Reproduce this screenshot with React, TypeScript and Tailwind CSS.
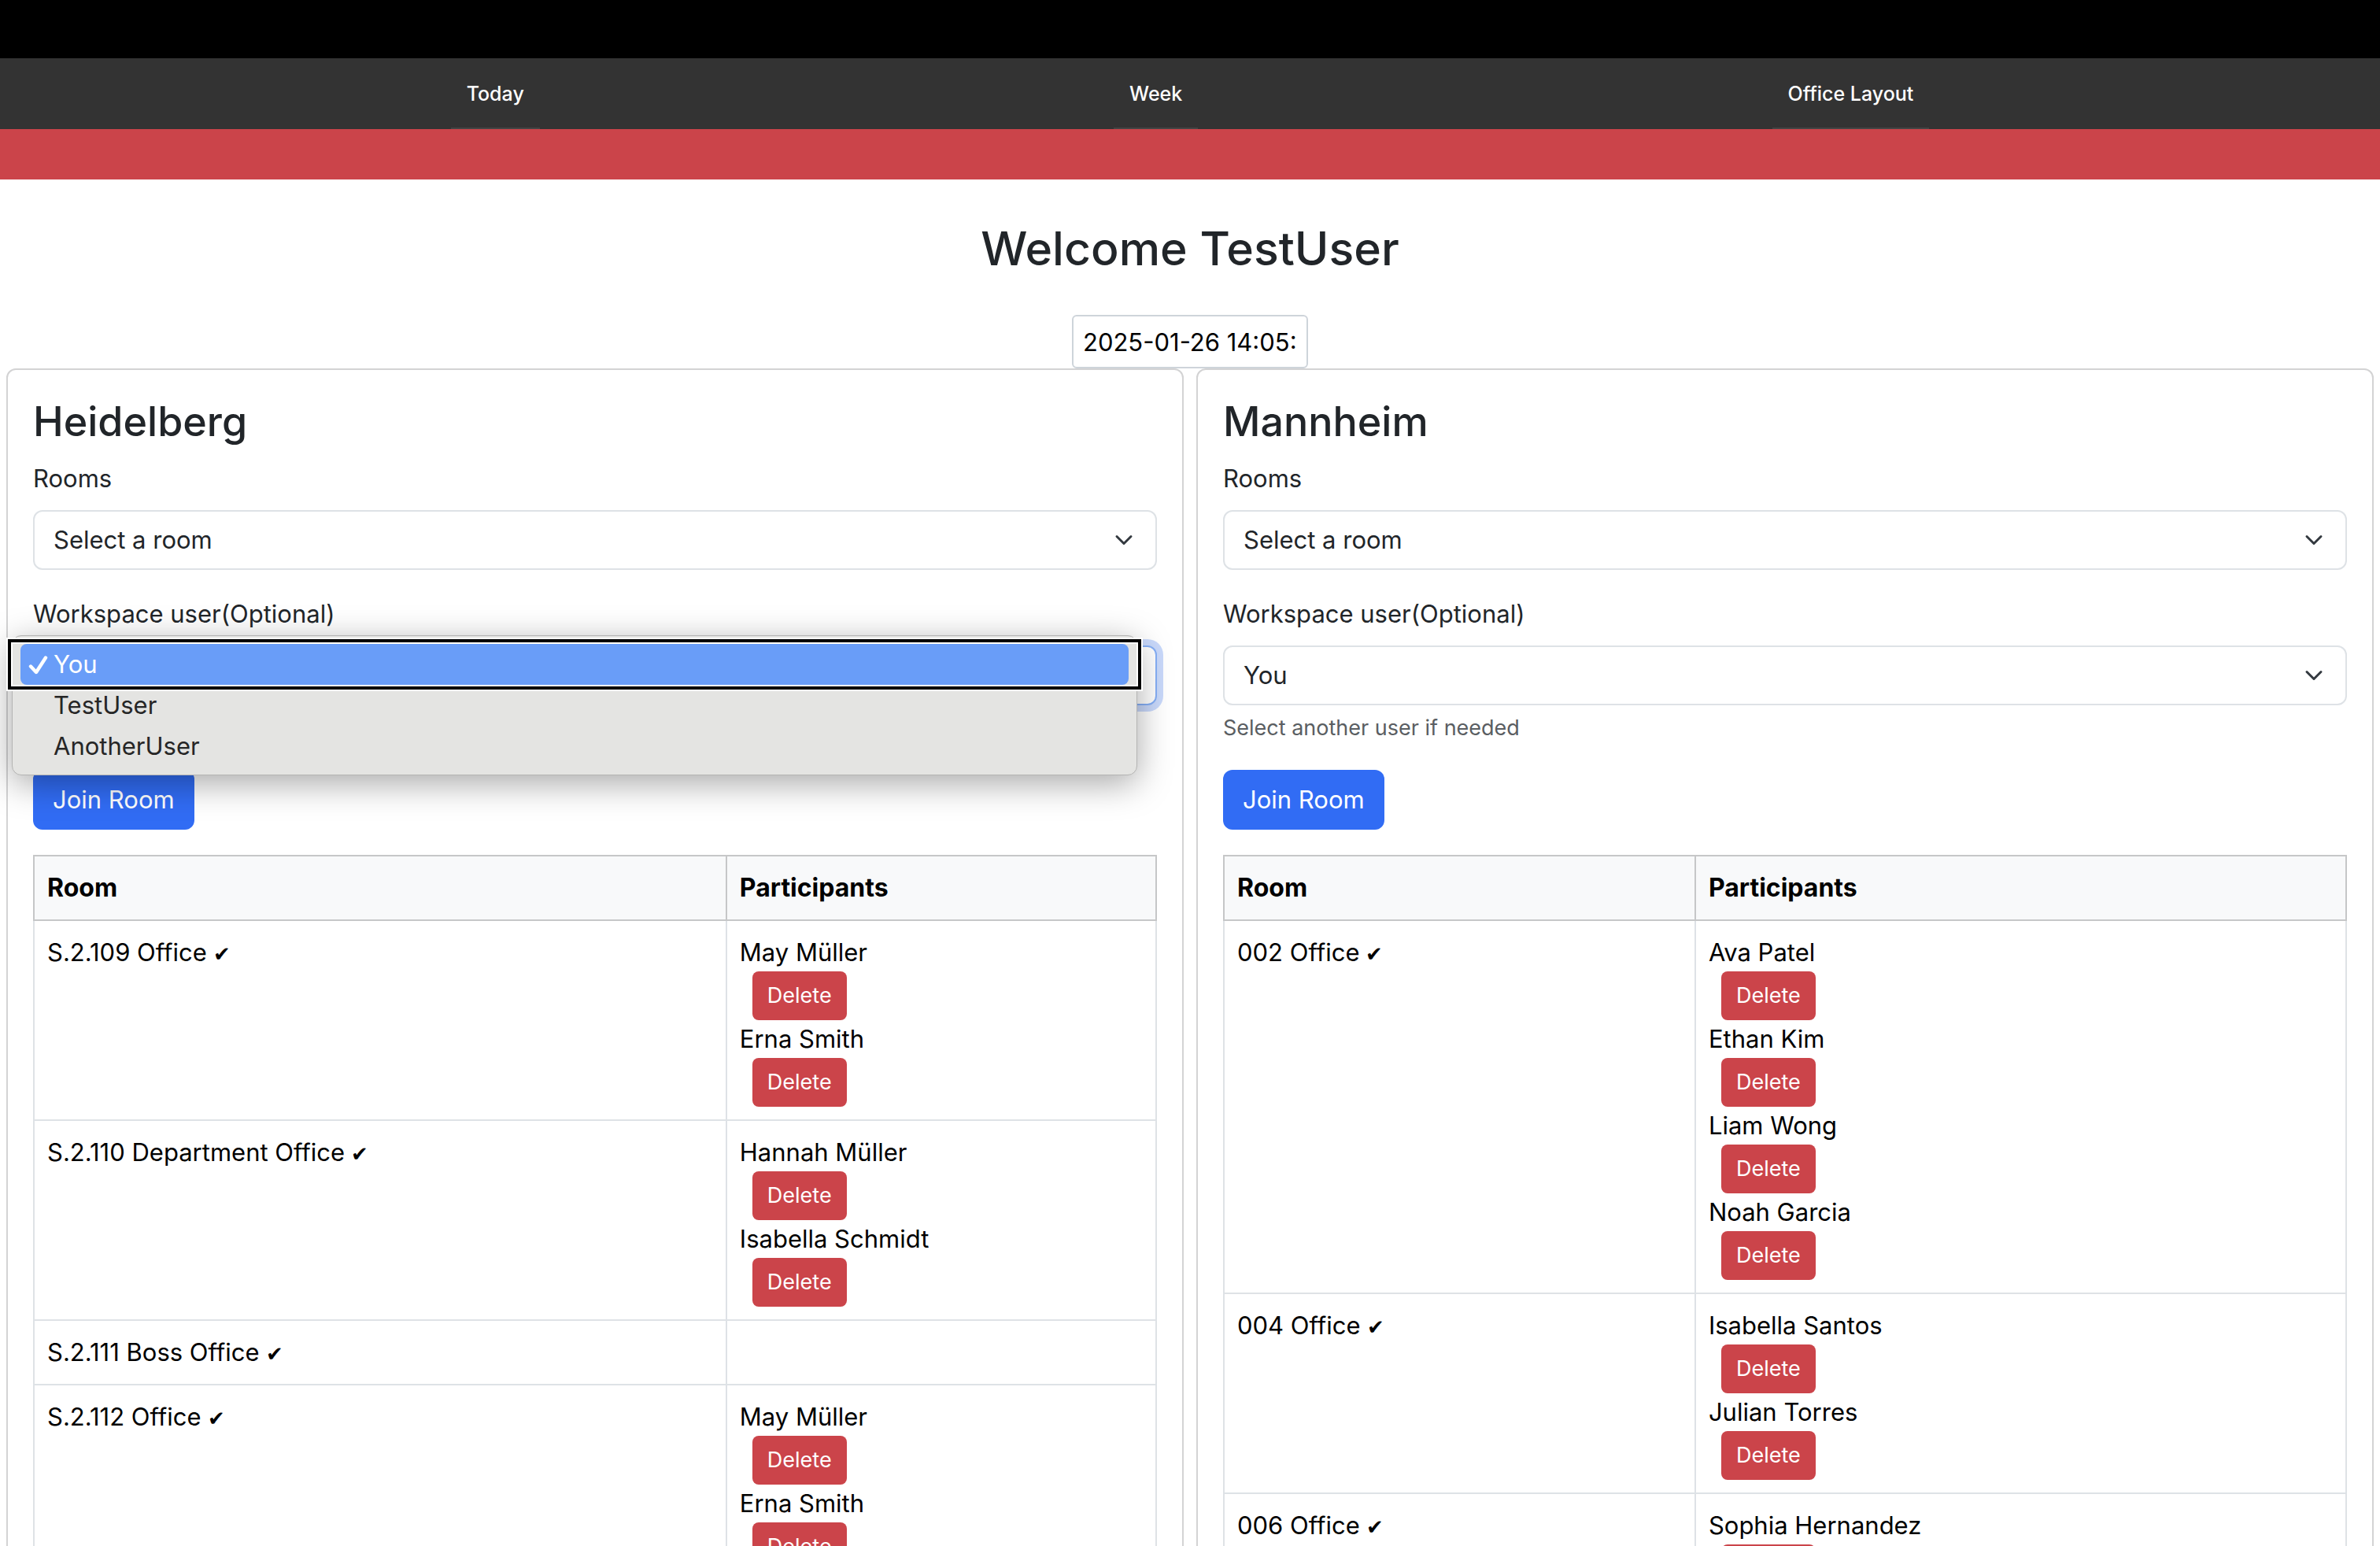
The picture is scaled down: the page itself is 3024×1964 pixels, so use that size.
type Row = { room: string; people: string[] };

const heidelberg: Row[] = [
  { room: "S.2.109 Office", people: ["May Müller", "Erna Smith"] },
  { room: "S.2.110 Department Office", people: ["Hannah Müller", "Isabella Schmidt"] },
  { room: "S.2.111 Boss Office", people: [] },
  { room: "S.2.112 Office", people: ["May Müller", "Erna Smith"] },
];

const mannheim: Row[] = [
  { room: "002 Office", people: ["Ava Patel", "Ethan Kim", "Liam Wong", "Noah Garcia"] },
  { room: "004 Office", people: ["Isabella Santos", "Julian Torres"] },
  { room: "006 Office", people: ["Sophia Hernandez"] },
];

const users = ["You", "TestUser", "AnotherUser"];

function Chevron() {
  return (
    <svg
      viewBox="0 0 16 16"
      className="pointer-events-none absolute right-[30px] top-[26px] size-6"
      fill="none"
      stroke="#343a40"
      strokeWidth="2"
      strokeLinecap="round"
      strokeLinejoin="round"
    >
      <path d="m2 5 6 6 6-6" />
    </svg>
  );
}

function SelectedMark() {
  return (
    <svg
      viewBox="0 0 26 26"
      className="mr-[6px] size-[26px]"
      fill="none"
      stroke="currentColor"
      strokeWidth="4.4"
      strokeLinecap="round"
      strokeLinejoin="round"
    >
      <path d="M3 15.5 10 23 22 4.5" />
    </svg>
  );
}

function Field({ id, label, options, open }: { id: string; label: string; options: string[]; open?: boolean }) {
  return (
    <div>
      <label htmlFor={id} className="mb-4 block text-[31px] leading-[48px]">
        {label}
      </label>
      <div className="relative">
        <select
          id={id}
          className={
            open
              ? "block h-[76px] w-full appearance-none rounded-xl border-2 border-[#86b0f7] bg-white px-6 text-[31px] ring-8 ring-[#c9d9fb] outline-none"
              : "block h-[76px] w-full appearance-none rounded-xl border-2 border-[#dee2e6] bg-white px-6 text-[31px]"
          }
        >
          {options.map((o) => (
            <option key={o}>{o}</option>
          ))}
        </select>
        <Chevron />
        {open && <UserMenu />}
      </div>
    </div>
  );
}

function UserMenu() {
  return (
    <ul
      role="listbox"
      aria-label="Workspace user"
      className="absolute -left-[27px] right-[25px] -top-[13px] rounded-xl border border-[#b4b4b3] bg-[#e4e4e2] px-[10px] py-[10px] text-[31px] leading-[52px] text-[#262626] shadow-[0_10px_44px_rgba(0,0,0,0.35)]"
    >
      {users.map((u, i) =>
        i === 0 ? (
          <li
            key={u}
            role="option"
            aria-selected="true"
            className="relative flex items-center rounded-lg bg-[#699df8] pl-[10px] text-white"
          >
            <SelectedMark />
            {u}
            <span className="absolute -inset-x-[18px] -inset-y-2 border-2 border-white">
              <span className="block h-full border-4 border-black">
                <span className="block h-full border-2 border-white" />
              </span>
            </span>
          </li>
        ) : (
          <li key={u} role="option" aria-selected="false" className="pl-[42px]">
            {u}
          </li>
        ),
      )}
    </ul>
  );
}

function RoomTable({ rows, firstCol }: { rows: Row[]; firstCol: string }) {
  return (
    <table className="mt-8 w-full table-fixed border-collapse text-[31px] leading-[48px] text-black">
      <thead>
        <tr className="bg-[#f8f9fa] text-left text-[32px] font-bold">
          <th className={"border-2 border-[#c6c7c8] p-4 " + firstCol}>Room</th>
          <th className="border-2 border-[#c6c7c8] p-4">Participants</th>
        </tr>
      </thead>
      <tbody>
        {rows.map((r) => (
          <tr key={r.room} className="align-top">
            <td className="border-2 border-[#dee2e6] p-4">
              {r.room}
              <span className="ml-2 text-[26px] leading-none">✔</span>
            </td>
            <td className="border-2 border-[#dee2e6] p-4">
              {r.people.map((p) => (
                <div key={p}>
                  {p}
                  <button
                    type="button"
                    className="ml-4 block h-[62px] rounded-lg bg-[#cb444a] px-[19px] text-[27px] text-white"
                  >
                    Delete
                  </button>
                </div>
              ))}
            </td>
          </tr>
        ))}
      </tbody>
    </table>
  );
}

function LocationCard({ name, rows, firstCol, open }: { name: string; rows: Row[]; firstCol: string; open?: boolean }) {
  return (
    <section className="flex-1 rounded-xl border-2 border-[#d3d3d4] bg-white p-8">
      <h2 className="mb-[14px] text-[52px] leading-[68px] font-medium">{name}</h2>
      <form className="flex flex-col">
        <Field id={name + "-room"} label="Rooms" options={["Select a room", ...rows.map((r) => r.room)]} />
        <div className="mt-8">
          <Field id={name + "-user"} label="Workspace user(Optional)" options={users} open={open} />
        </div>
        <p
          className={
            open
              ? "invisible mt-2 text-[27px] leading-[42px] text-[#5a5e62]"
              : "mt-2 text-[27px] leading-[42px] text-[#5a5e62]"
          }
        >
          Select another user if needed
        </p>
        <button
          type="button"
          className="mt-8 h-[76px] self-start rounded-xl bg-[#316cf4] px-[25px] text-[31px] text-white"
        >
          Join Room
        </button>
      </form>
      <RoomTable rows={rows} firstCol={firstCol} />
    </section>
  );
}

export default function App() {
  return (
    <div className="flex h-screen flex-col overflow-hidden bg-white font-['Inter',sans-serif] text-[#212529]">
      <div className="h-[74px] shrink-0 bg-black" />
      <nav className="flex h-[90px] shrink-0 justify-around bg-[#333333] px-52 text-[25px] font-medium text-white">
        {["Today", "Week", "Office Layout"].map((t) => (
          <a key={t} href="#" className="border-b-2 border-[#444444] px-5 leading-[90px]">
            {t}
          </a>
        ))}
      </nav>
      <div className="h-16 shrink-0 bg-[#cb444a]" />
      <main className="flex flex-col">
        <h1 className="mt-12 text-center text-[59px] leading-[80px] font-medium">Welcome TestUser</h1>
        <input
          aria-label="Date and time"
          defaultValue="2025-01-26 14:05:00"
          className="mt-11 h-[68px] w-[300px] self-center rounded-md border-2 border-[#ced4da] bg-white px-3 text-[31px] text-black"
        />
        <div className="flex gap-4 px-2 pb-4">
          <LocationCard name="Heidelberg" rows={heidelberg} firstCol="w-[61.7%]" open />
          <LocationCard name="Mannheim" rows={mannheim} firstCol="w-[42%]" />
        </div>
      </main>
    </div>
  );
}
